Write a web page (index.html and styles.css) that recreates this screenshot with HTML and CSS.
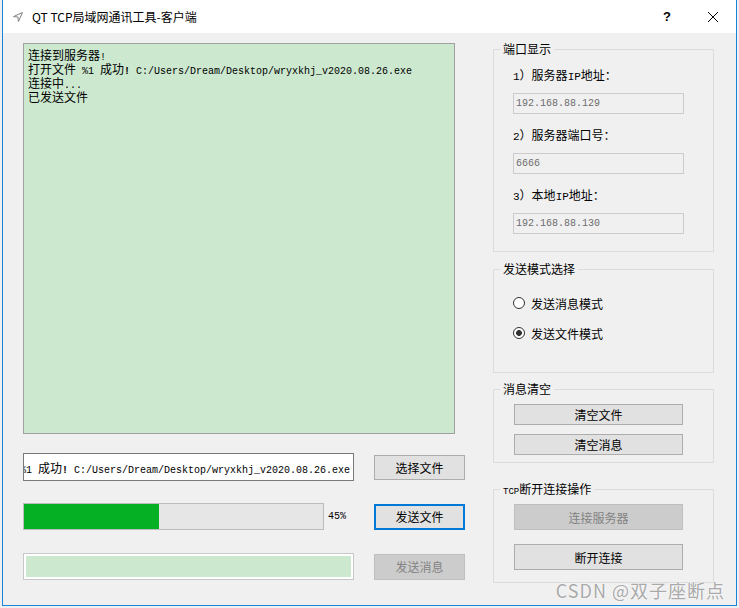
FILE: index.html
```html
<!DOCTYPE html>
<html lang="zh-CN">
<head>
    <meta charset="UTF-8">
    <title>QT TCP局域网通讯工具-客户端</title>
    <link rel="stylesheet" href="styles.css">
</head>
<body>
    <div class="window">
        <div class="titlebar">
            <svg class="app-icon" width="10" height="10" viewBox="0 0 10 10">
                <path d="M9.5 0.5 L0.5 4.6 L5 5 L5.4 9.5 Z" fill="none" stroke="#808080" stroke-width="1" stroke-linejoin="round"/>
            </svg>
            <span class="title">QT TCP局域网通讯工具-客户端</span>
            <div class="caption-btn help">?</div>
            <div class="caption-btn close">
                <svg width="10" height="10" viewBox="0 0 10 10">
                    <path d="M0 0 L10 10 M10 0 L0 10" stroke="#000" stroke-width="1"/>
                </svg>
            </div>
        </div>

        <div class="client">
            <div class="left">
                <div class="log">
                    <div class="log-line">连接到服务器<span class="en">!</span></div>
                    <div class="log-line">打开文件<span class="en"> %1 </span>成功<span class="en bold">!</span><span class="en"> C:/Users/Dream/Desktop/wryxkhj_v2020.08.26.exe</span></div>
                    <div class="log-line">连接中<span class="en">...</span></div>
                    <div class="log-line">已发送文件</div>
                </div>

                <div class="row file-row">
                    <div class="line-edit path">
                        <span class="path-text">打开文件<span class="en"> %1 </span>成功<span class="en bold">!</span><span class="en"> C:/Users/Dream/Desktop/wryxkhj_v2020.08.26.exe</span></span>
                    </div>
                    <button class="btn">选择文件</button>
                </div>

                <div class="row progress-row">
                    <div class="progress">
                        <div class="progress-fill" style="width: 45%"></div>
                    </div>
                    <span class="percent">45%</span>
                    <button class="btn focus">发送文件</button>
                </div>

                <div class="row msg-row">
                    <div class="line-edit msg"></div>
                    <button class="btn disabled">发送消息</button>
                </div>
            </div>

            <div class="right">
                <fieldset class="group ports">
                    <legend>端口显示</legend>
                    <div class="field-label"><span class="en">1</span>）服务器<span class="en">IP</span>地址：</div>
                    <div class="field">192.168.88.129</div>
                    <div class="field-label"><span class="en">2</span>）服务器端口号：</div>
                    <div class="field">6666</div>
                    <div class="field-label"><span class="en">3</span>）本地<span class="en">IP</span>地址：</div>
                    <div class="field">192.168.88.130</div>
                </fieldset>

                <fieldset class="group mode">
                    <legend>发送模式选择</legend>
                    <label class="radio"><input type="radio" name="mode">发送消息模式</label>
                    <label class="radio"><input type="radio" name="mode" checked>发送文件模式</label>
                </fieldset>

                <fieldset class="group clear">
                    <legend>消息清空</legend>
                    <button class="btn">清空文件</button>
                    <button class="btn">清空消息</button>
                </fieldset>

                <fieldset class="group tcp">
                    <legend><span class="en narrow">TCP</span>断开连接操作</legend>
                    <button class="btn disabled">连接服务器</button>
                    <button class="btn">断开连接</button>
                </fieldset>
            </div>
        </div>

        <div class="watermark">CSDN @双子座断点</div>
    </div>
</body>
</html>
```

FILE: styles.css
```css
body {
    margin: 0;
    background: #f0f0f0;
    font-family: "Noto Sans CJK SC", sans-serif;
    font-size: 12px;
    color: #000;
}
.window {
    position: relative;
    margin-left: 2px;
    width: 735px;
    height: 606px;
    box-sizing: border-box;
    border: 1px solid #1883d7;
    border-top: none;
    background: #f0f0f0;
}
.titlebar {
    height: 33px;
    background: #fff;
    display: flex;
    align-items: center;
    padding-left: 10px;
}
.app-icon {
    margin-right: 9px;
}
.title {
    flex: 1;
    font-size: 12px;
}
.caption-btn {
    width: 46px;
    height: 33px;
    display: flex;
    align-items: center;
    justify-content: center;
}
.help {
    font-family: "Liberation Sans", sans-serif;
    font-weight: bold;
    font-size: 13px;
}
.en {
    font-family: "Liberation Mono", monospace;
    font-size: 11px;
    line-height: 0;
}
.en.narrow {
    font-size: 9px;
}
.bold {
    font-weight: bold;
}

/* left side */
.client {
    display: flex;
    padding: 10px 0 0 20px;
}
.left {
    width: 442px;
    display: flex;
    flex-direction: column;
}
.log {
    width: 432px;
    height: 391px;
    box-sizing: border-box;
    border: 1px solid #a0a0a0;
    background: #cce8cf;
    padding: 4px 0 0 4px;
}
.log-line {
    height: 14px;
    line-height: 14px;
    white-space: pre;
}
.log .en {
    font-size: 10px;
}
.row {
    display: flex;
    align-items: center;
}
.file-row {
    margin-top: 19px;
    height: 28px;
}
.progress-row {
    margin-top: 22px;
    height: 27px;
}
.msg-row {
    margin-top: 23px;
    height: 27px;
}
.line-edit {
    width: 331px;
    box-sizing: border-box;
}
.path {
    height: 28px;
    border: 1px solid #7a7a7a;
    background: #fff;
    overflow: hidden;
    display: flex;
    justify-content: flex-end;
    align-items: center;
    padding-right: 3px;
    white-space: pre;
}
.path-text {
    flex-shrink: 0;
}
.path .en {
    font-size: 10px;
}
.msg {
    height: 27px;
    border: 1px solid #c8c8c8;
    background: #cce8cf;
    box-shadow: inset 0 0 0 2px #fff;
}
.progress {
    width: 301px;
    height: 27px;
    box-sizing: border-box;
    border: 1px solid #bcbcbc;
    background: #e6e6e6;
}
.progress-fill {
    height: 100%;
    background: #06b025;
}
.percent {
    margin-left: 4px;
    font-family: "Liberation Mono", monospace;
    font-size: 10px;
}
.btn {
    width: 91px;
    height: 25px;
    box-sizing: border-box;
    padding: 0;
    border: 1px solid #adadad;
    background: #e1e1e1;
    font-family: "Noto Sans CJK SC", sans-serif;
    font-size: 12px;
    color: #000;
}
.left .btn {
    margin-left: auto;
}
.btn.focus {
    height: 26px;
    border: 2px solid #0078d7;
}
.btn.disabled {
    height: 26px;
    background: #cccccc;
    border-color: #bfbfbf;
    color: #838383;
}

/* right side */
.right {
    width: 221px;
    margin-left: 28px;
}
.group {
    margin: 0;
    padding: 0 0 0 19px;
    border: 1px solid #dcdcdc;
    min-width: 0;
}
.group legend {
    margin-left: -13px;
    padding: 0 3px;
    height: 12px;
    line-height: 12px;
    white-space: pre;
}
.ports {
    padding-top: 12px;
    padding-bottom: 17px;
}
.field-label {
    height: 16px;
    line-height: 16px;
    white-space: pre;
}
.field {
    width: 171px;
    height: 21px;
    margin-top: 10px;
    box-sizing: border-box;
    border: 1px solid #cccccc;
    background: #f0f0f0;
    color: #6d6d6d;
    font-family: "Liberation Mono", monospace;
    font-size: 10px;
    line-height: 19px;
    padding-left: 2px;
}
.field + .field-label {
    margin-top: 13px;
}
.mode {
    margin-top: 11px;
    padding-top: 20px;
    padding-bottom: 31px;
}
.radio {
    display: flex;
    align-items: center;
    height: 16px;
}
.radio + .radio {
    margin-top: 14px;
}
.radio input {
    appearance: none;
    width: 12px;
    height: 12px;
    margin: 0 6px 0 0;
    border: 1px solid #333;
    border-radius: 50%;
    background: #fff;
}
.radio input:checked {
    background: radial-gradient(circle, #333 0 2.6px, #fff 3.2px);
}
.clear {
    margin-top: 10px;
    padding-top: 9px;
    padding-bottom: 7px;
}
.clear .btn {
    display: block;
    width: 169px;
    height: 21px;
    margin-left: 1px;
}
.clear .btn + .btn {
    margin-top: 9px;
}
.tcp {
    margin-top: 20px;
    padding-top: 9px;
    padding-bottom: 12px;
}
.tcp .btn {
    display: block;
    width: 169px;
    height: 26px;
    margin-left: 1px;
}
.tcp .btn + .btn {
    margin-top: 14px;
}
.watermark {
    position: absolute;
    right: 11px;
    top: 579px;
    line-height: 22px;
    font-size: 18px;
    letter-spacing: 1px;
    color: #a9a9a9;
    text-shadow: 0 0 2px #fff, 0 0 1px #fff;
}
```
